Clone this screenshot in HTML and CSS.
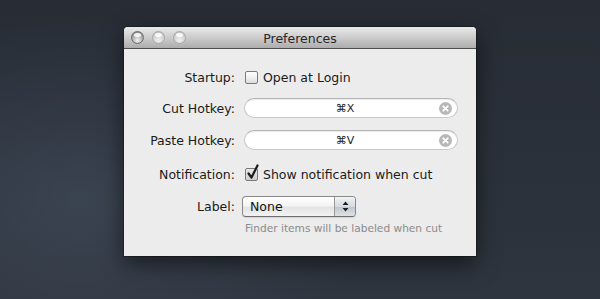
FILE: index.html
```html
<!DOCTYPE html>
<html>
<head>
<meta charset="utf-8">
<link rel="stylesheet" href="styles.css">
</head>
<body>
<div class="window">
  <div class="titlebar">
    <div class="lights">
      <span class="light"></span><span class="light dim"></span><span class="light dim"></span>
    </div>
    <div class="title">Preferences</div>
  </div>
  <div class="content">
    <div class="row r-startup">
      <div class="label">Startup:</div>
      <div class="control"><span class="checkbox"></span><span class="cbtext">Open at Login</span></div>
    </div>
    <div class="row r-cut">
      <div class="label">Cut Hotkey:</div>
      <div class="control"><div class="field"><span class="fieldtext">⌘X</span><span class="clear"><svg width="13" height="13" viewBox="0 0 13 13"><circle cx="6.5" cy="6.5" r="6.5" fill="#b8b8b8"/><path d="M4.3 4.3L8.7 8.7M8.7 4.3L4.3 8.7" stroke="#fff" stroke-width="1.8" stroke-linecap="round"/></svg></span></div></div>
    </div>
    <div class="row r-paste">
      <div class="label">Paste Hotkey:</div>
      <div class="control"><div class="field"><span class="fieldtext">⌘V</span><span class="clear"><svg width="13" height="13" viewBox="0 0 13 13"><circle cx="6.5" cy="6.5" r="6.5" fill="#b8b8b8"/><path d="M4.3 4.3L8.7 8.7M8.7 4.3L4.3 8.7" stroke="#fff" stroke-width="1.8" stroke-linecap="round"/></svg></span></div></div>
    </div>
    <div class="row r-notif">
      <div class="label">Notification:</div>
      <div class="control"><span class="checkbox checked"><svg class="check" width="14" height="16" viewBox="0 0 14 16"><path d="M2.5 9.5L5.5 13.5L11.5 1.5" fill="none" stroke="#1a1a1a" stroke-width="2.2" stroke-linejoin="round" stroke-linecap="round"/></svg></span><span class="cbtext">Show notification when cut</span></div>
    </div>
    <div class="row r-label">
      <div class="label">Label:</div>
      <div class="control"><div class="popup"><span class="popuptext">None</span><span class="arrows"><svg width="7" height="11" viewBox="0 0 7 11"><path d="M3.5 0.5L6.5 4H0.5Z M3.5 10.5L6.5 7H0.5Z" fill="#222"/></svg></span></div></div>
    </div>
    <div class="row r-hint">
      <div class="label"></div>
      <div class="control hint">Finder items will be labeled when cut</div>
    </div>
  </div>
</div>
</body>
</html>
```

FILE: styles.css
```css
html, body {
  margin: 0;
  height: 100%;
}
body {
  width: 600px;
  height: 299px;
  overflow: hidden;
  background:
    radial-gradient(ellipse 420px 260px at 80px 200px, rgba(72,84,100,0.5), rgba(72,84,100,0) 70%),
    linear-gradient(180deg, #272c35 0%, #2b313b 60%, #2f353f 100%);
  display: flex;
  justify-content: center;
  align-items: flex-start;
  padding-top: 27px;
  box-sizing: border-box;
  font-family: "DejaVu Sans", "Liberation Sans", sans-serif;
}
.window {
  width: 352px;
  height: 229px;
  background: #ececec;
  border-radius: 4px 4px 0 0;
  box-shadow: 0 8px 22px rgba(0,0,0,0.55), 0 0 0 1px rgba(0,0,0,0.25);
  display: flex;
  flex-direction: column;
  overflow: hidden;
}
.titlebar {
  height: 21px;
  flex: none;
  background: linear-gradient(180deg, #e9e9e9 0%, #d2d2d2 40%, #adadad 100%);
  border-bottom: 1px solid #4e4e4e;
  position: relative;
  display: flex;
  align-items: center;
  justify-content: center;
}
.lights {
  position: absolute;
  left: 7px;
  top: 4px;
  display: flex;
  gap: 8px;
}
.light {
  width: 13px;
  height: 13px;
  border-radius: 50%;
  box-sizing: border-box;
  background: radial-gradient(circle at 50% 75%, #f4f4f4 0%, #b5b5b5 45%, #7d7d7d 100%);
  border: 1px solid #6b6b6b;
  position: relative;
}
.light::after {
  content: "";
  position: absolute;
  left: 2px;
  top: 1px;
  width: 7px;
  height: 4px;
  border-radius: 50%;
  background: rgba(255,255,255,0.85);
}
.light.dim {
  background: radial-gradient(circle at 50% 75%, #efefef 0%, #d3d3d3 55%, #b8b8b8 100%);
  border-color: #a9a9a9;
}
.title {
  font-size: 12.5px;
  color: #262626;
  padding-top: 1px;
}
.content {
  display: flex;
  flex-direction: column;
  padding: 17px 18px 0 0;
}
.row {
  display: flex;
  align-items: center;
  height: 22px;
}
.r-cut { margin-top: 9px; }
.r-paste { margin-top: 10px; }
.r-notif { margin-top: 12px; }
.r-label { margin-top: 10px; }
.r-hint { margin-top: 2px; height: 18px; }
.label {
  width: 111px;
  flex: none;
  text-align: right;
  font-size: 12.5px;
  color: #1a1a1a;
  padding-right: 9px;
  box-sizing: content-box;
}
.control {
  flex: 1;
  display: flex;
  align-items: center;
  font-size: 12.5px;
  color: #1a1a1a;
}
.checkbox {
  width: 13px;
  height: 13px;
  box-sizing: border-box;
  border: 1px solid #7a7a7a;
  border-radius: 2px;
  background: linear-gradient(180deg, #ffffff 0%, #f0f0f0 50%, #dcdcdc 100%);
  margin-left: 1px;
  margin-right: 5px;
  position: relative;
  flex: none;
}
.checkbox.checked {
  background: linear-gradient(180deg, #e8e8e8 0%, #cfcfcf 100%);
}
.check {
  position: absolute;
  left: 0px;
  top: -5px;
}
.field {
  flex: 1;
  height: 20px;
  box-sizing: border-box;
  border: 1px solid #c9c9c9;
  border-top-color: #b5b5b5;
  border-radius: 10px;
  background: #fff;
  box-shadow: inset 0 1px 1px rgba(0,0,0,0.08);
  display: flex;
  align-items: center;
  position: relative;
}
.fieldtext {
  flex: 1;
  text-align: center;
  font-size: 11px;
  color: #222;
  padding-left: 6px;
}
.clear {
  display: flex;
  margin-right: 5px;
}
.popup {
  width: 114px;
  height: 21px;
  margin-left: -2px;
  box-sizing: border-box;
  border: 1px solid #8a8a8a;
  border-bottom-color: #6e6e6e;
  border-radius: 4px;
  background: linear-gradient(180deg, #ffffff 0%, #f4f4f4 45%, #e4e4e4 55%, #f2f2f2 100%);
  display: flex;
  align-items: stretch;
  overflow: hidden;
  box-shadow: 0 1px 1px rgba(0,0,0,0.1);
}
.popuptext {
  flex: 1;
  display: flex;
  align-items: center;
  padding-left: 7px;
  font-size: 12.5px;
  color: #111;
}
.arrows {
  width: 20px;
  border-left: 1px solid #9a9a9a;
  background: linear-gradient(180deg, #f0f3f6 0%, #d5dae0 50%, #c2c8cf 55%, #dde2e7 100%);
  display: flex;
  align-items: center;
  justify-content: center;
}
.hint {
  font-size: 10.6px;
  color: #8b8b8b;
  padding-left: 1px;
}
```
